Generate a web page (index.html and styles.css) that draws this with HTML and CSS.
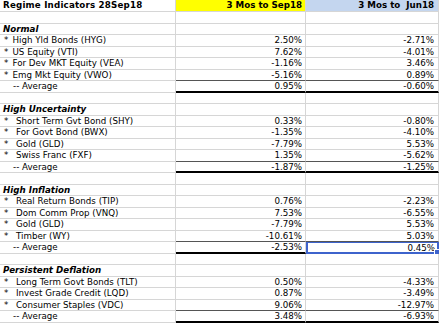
FILE: index.html
```html
<!DOCTYPE html>
<html>
<head>
<meta charset="utf-8">
<link rel="stylesheet" href="styles.css">
</head>
<body>
<div class="sheet">
  <div class="row head"><div class="c1 b">Regime Indicators 28Sep18</div><div class="c2 b yellow">3 Mos to Sep18</div><div class="c3 b blue">3 Mos to&nbsp; Jun18</div></div>
  <div class="row"><div class="c1"></div><div class="c2"></div><div class="c3"></div></div>
  <div class="row"><div class="c1 bi">Normal</div><div class="c2"></div><div class="c3"></div></div>
  <div class="row"><div class="c1"><span class="star">*</span>High Yld Bonds (HYG)</div><div class="c2">2.50%</div><div class="c3">-2.71%</div></div>
  <div class="row"><div class="c1"><span class="star">*</span>US Equity (VTI)</div><div class="c2">7.62%</div><div class="c3">-4.01%</div></div>
  <div class="row"><div class="c1"><span class="star">*</span>For Dev MKT Equity (VEA)</div><div class="c2">-1.16%</div><div class="c3">3.46%</div></div>
  <div class="row pre"><div class="c1"><span class="star">*</span>Emg Mkt Equity (VWO)</div><div class="c2">-5.16%</div><div class="c3">0.89%</div></div>
  <div class="row avg"><div class="c1 av">-- Average</div><div class="c2">0.95%</div><div class="c3">-0.60%</div></div>
  <div class="row"><div class="c1"></div><div class="c2"></div><div class="c3"></div></div>
  <div class="row"><div class="c1 bi">High Uncertainty</div><div class="c2"></div><div class="c3"></div></div>
  <div class="row"><div class="c1"><span class="star w">*</span>Short Term Gvt Bond (SHY)</div><div class="c2">0.33%</div><div class="c3">-0.80%</div></div>
  <div class="row"><div class="c1"><span class="star w">*</span>For Govt Bond (BWX)</div><div class="c2">-1.35%</div><div class="c3">-4.10%</div></div>
  <div class="row"><div class="c1"><span class="star w">*</span>Gold (GLD)</div><div class="c2">-7.79%</div><div class="c3">5.53%</div></div>
  <div class="row pre"><div class="c1"><span class="star w">*</span>Swiss Franc (FXF)</div><div class="c2">1.35%</div><div class="c3">-5.62%</div></div>
  <div class="row avg"><div class="c1 av">-- Average</div><div class="c2">-1.87%</div><div class="c3">-1.25%</div></div>
  <div class="row"><div class="c1"></div><div class="c2"></div><div class="c3"></div></div>
  <div class="row"><div class="c1 bi">High Inflation</div><div class="c2"></div><div class="c3"></div></div>
  <div class="row"><div class="c1"><span class="star w">*</span>Real Return Bonds (TIP)</div><div class="c2">0.76%</div><div class="c3">-2.23%</div></div>
  <div class="row"><div class="c1"><span class="star w">*</span>Dom Comm Prop (VNQ)</div><div class="c2">7.53%</div><div class="c3">-6.55%</div></div>
  <div class="row"><div class="c1"><span class="star w">*</span>Gold (GLD)</div><div class="c2">-7.79%</div><div class="c3">5.53%</div></div>
  <div class="row pre"><div class="c1"><span class="star w">*</span>Timber (WY)</div><div class="c2">-10.61%</div><div class="c3">5.03%</div></div>
  <div class="row avg"><div class="c1 av">-- Average</div><div class="c2">-2.53%</div><div class="c3 sel">0.45%<span class="handle"></span></div></div>
  <div class="row"><div class="c1"></div><div class="c2"></div><div class="c3"></div></div>
  <div class="row"><div class="c1 bi">Persistent Deflation</div><div class="c2"></div><div class="c3"></div></div>
  <div class="row"><div class="c1"><span class="star w">*</span>Long Term Govt Bonds (TLT)</div><div class="c2">0.50%</div><div class="c3">-4.33%</div></div>
  <div class="row"><div class="c1"><span class="star w">*</span>Invest Grade Credit (LQD)</div><div class="c2">0.87%</div><div class="c3">-3.49%</div></div>
  <div class="row pre"><div class="c1"><span class="star w">*</span>Consumer Staples (VDC)</div><div class="c2">9.06%</div><div class="c3">-12.97%</div></div>
  <div class="row avg"><div class="c1 av">-- Average</div><div class="c2">3.48%</div><div class="c3">-6.93%</div></div>
</div>
</body>
</html>
```
FILE: styles.css
```css
html, body {
  margin: 0;
  padding: 0;
  background: #fff;
}
.sheet {
  display: flex;
  flex-direction: column;
  width: 439px;
  font-family: "DejaVu Sans", Verdana, sans-serif;
  font-size: 8.7px;
  color: #000;
}
.row {
  display: flex;
  height: 11.53px;
  line-height: 10.5px;
}
.row.head {
  height: 12px;
  line-height: 11px;
}
.row.head .c1 {
  letter-spacing: 0.2px;
}
.row > div {
  box-sizing: border-box;
  border-bottom: 1px solid #d6d6d6;
  border-right: 1px solid #d6d6d6;
  white-space: pre;
  overflow: hidden;
}
.c1 {
  width: 176px;
  padding-left: 3px;
}
.c2 {
  width: 130px;
  text-align: right;
  padding-right: 3px;
}
.c3 {
  width: 133px;
  text-align: right;
  padding-right: 4px;
  position: relative;
}
.b { font-weight: bold; }
.bi { font-weight: bold; font-style: italic; }
.yellow { background: #ffff00; }
.blue { background: #c4d6ef; }
.star {
  display: inline-block;
  width: 8.5px;
  padding-left: 1px;
}
.star.w { width: 12px; }
.av { padding-left: 13px; }
.row.pre .c2, .row.pre .c3 {
  border-bottom: 1px solid #555;
}
.row.avg .c2, .row.avg .c3 {
  border-bottom: 2px solid #000;
}
.row.avg .c3.sel {
  border: 2px solid #3d63cc;
  border-top-width: 1px;
  padding-right: 2px;
  overflow: visible;
}
.handle {
  position: absolute;
  right: -3px;
  bottom: -3px;
  width: 4px;
  height: 4px;
  background: #3d63cc;
  border: 1px solid #fff;
}
```
